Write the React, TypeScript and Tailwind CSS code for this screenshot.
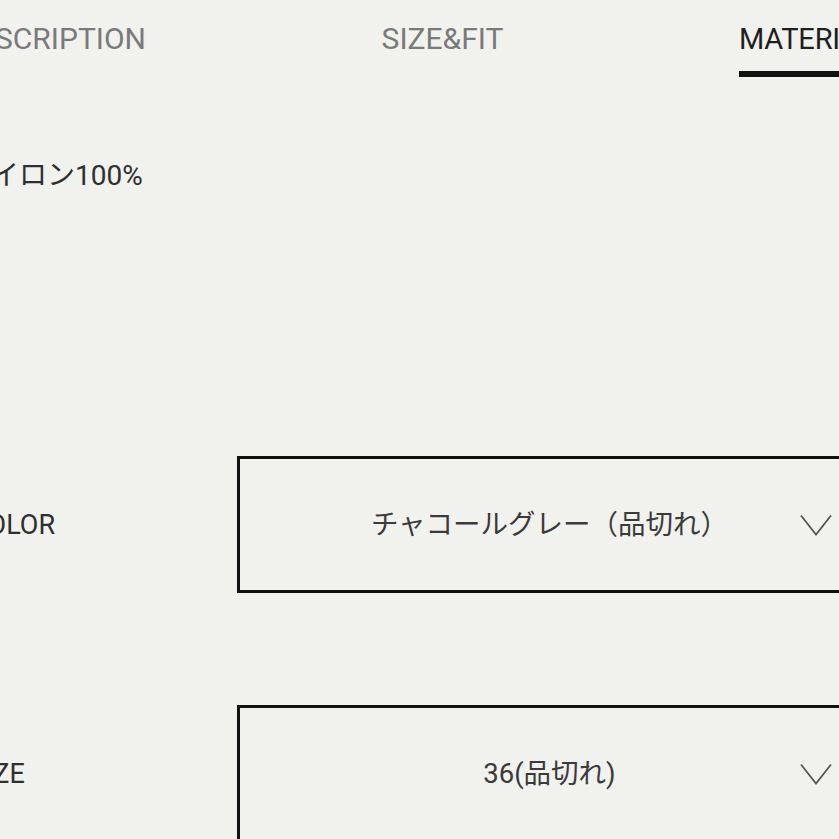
const font = { fontFamily: "Roboto, 'Noto Sans CJK JP', sans-serif" }

function SelectBox({ value }: { value: string }) {
  return (
    <div className="relative flex items-center justify-center w-[625px] h-[137px] shrink-0 border-[3px] border-[#111]">
      <span className="text-[27.5px] leading-[36px] text-[#3a3a3a]">{value}</span>
      <svg
        className="absolute right-[27px] top-1/2 -translate-y-1/2"
        width="32"
        height="23"
        viewBox="0 0 32 23"
        fill="none"
        stroke="#555"
        strokeWidth="1.8"
      >
        <path d="M1 2 L16 21 L31 2" />
      </svg>
    </div>
  )
}

function Row({ label, value }: { label: string; value: string }) {
  return (
    <div className="flex items-center">
      <div className="w-[237px] shrink-0">
        <span className="block ml-[-30px] text-[27px] leading-[36px] text-[#2f2f2f] whitespace-nowrap">{label}</span>
      </div>
      <SelectBox value={value} />
    </div>
  )
}

export default function App() {
  return (
    <div className="w-[839px] h-[839px] overflow-hidden bg-[#f1f1ee]" style={font}>
      {/* tabs */}
      <div className="flex items-start h-[77px]">
        <div className="w-[146px] shrink-0 flex justify-end pt-[22px]">
          <span className="text-[30px] leading-[34px] text-[#7a7a7a] whitespace-nowrap">DESCRIPTION</span>
        </div>
        <div className="w-[593px] shrink-0 flex justify-center pt-[22px]">
          <span className="text-[30px] leading-[34px] text-[#7a7a7a] whitespace-nowrap">SIZE&amp;FIT</span>
        </div>
        <div className="shrink-0 flex flex-col pt-[22px]">
          <span className="text-[29px] leading-[34px] tracking-[-0.2px] text-[#1e1e1e] whitespace-nowrap">MATERIAL</span>
          <div className="mt-[15px] h-[6px] bg-[#111]" />
        </div>
      </div>

      {/* material */}
      <p className="mt-[81px] ml-[-37px] text-[28px] leading-[36px] text-[#2f2f2f] whitespace-nowrap">ナイロン100%</p>

      <div className="mt-[262px] flex flex-col gap-[112px]">
        <Row label="COLOR" value="チャコールグレー（品切れ）" />
        <Row label="SIZE" value="36(品切れ)" />
      </div>
    </div>
  )
}
